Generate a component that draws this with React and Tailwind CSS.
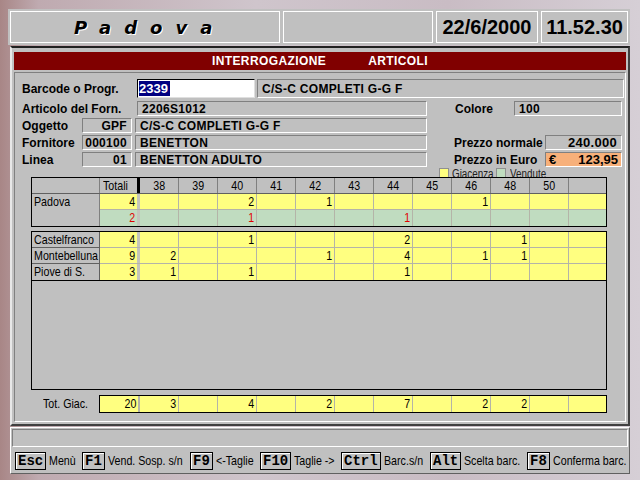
import React from 'react';

const SIZES = ['38', '39', '40', '41', '42', '43', '44', '45', '46', '48', '50'];

const PADOVA_GIAC = { tot: 4, 40: 2, 42: 1, 46: 1 };
const PADOVA_VEND = { tot: 2, 40: 1, 44: 1 };
const NEGOZI = [
  { name: 'Castelfranco', v: { tot: 4, 40: 1, 44: 2, 48: 1 } },
  { name: 'Montebelluna', v: { tot: 9, 38: 2, 42: 1, 44: 4, 46: 1, 48: 1 } },
  { name: 'Piove di S.', v: { tot: 3, 38: 1, 40: 1, 44: 1 } },
];
const TOTALI = { tot: 20, 38: 3, 40: 4, 42: 2, 44: 7, 46: 2, 48: 2 };

const KEYS = [
  { k: 'Esc', label: 'Menù', w: 'w-[67px]' },
  { k: 'F1', label: 'Vend. Sosp. s/n', w: 'w-[108px]' },
  { k: 'F9', label: '<-Taglie', w: 'w-[70px]' },
  { k: 'F10', label: 'Taglie ->', w: 'w-[81px]' },
  { k: 'Ctrl', label: 'Barc.s/n', w: 'w-[89px]' },
  { k: 'Alt', label: 'Scelta barc.', w: 'w-[97px]' },
  { k: 'F8', label: 'Conferma barc.', w: 'w-[100px]' },
];

// testo stretto (tipo Arial Narrow)
function N({ children, o = 'origin-left' }) {
  return <span className={`inline-block ${o} scale-x-[0.82] whitespace-nowrap`}>{children}</span>;
}

function Field({ className = '', children }) {
  return (
    <div className={`flex items-center border border-t-[#808080] border-l-[#808080] border-r-white border-b-white bg-[#c0c0c0] px-[4px] text-[12px] font-bold tracking-[0.3px] ${className}`}>
      {children}
    </div>
  );
}

// una riga di dati della griglia (giacenze o vendute)
function DataRow({ values, bg, red, last }) {
  const col = red ? 'text-[#e00000]' : 'text-black';
  return (
    <div className={`flex h-[16px] ${bg} ${last ? '' : 'border-b border-[#b4b4a8]'}`}>
      <div className={`w-[40px] border-r-[3px] border-[#c4c4bc] text-right pr-[2px] leading-[15px] ${col}`}>
        <N o="origin-right">{values.tot}</N>
      </div>
      {SIZES.map((s) => (
        <div key={s} className={`w-[39px] border-r border-[#b4b4a8] text-right pr-[2px] leading-[15px] ${col}`}>
          <N o="origin-right">{values[s] ?? ''}</N>
        </div>
      ))}
      <div className="flex-1" />
    </div>
  );
}

export default function App() {
  return (
    <div className="w-[640px] h-[480px] overflow-hidden bg-[linear-gradient(90deg,#a88686_0%,#bfaab0_6%,#cfc5cc_40%,#c9bcc4_70%,#d6cfd6_100%)] font-['Liberation_Sans',Arial,sans-serif] text-black flex flex-col">
      {/* barra superiore */}
      <div className="mt-[9px] ml-[8px] w-[622px] h-[36px] bg-[#c0c0c0] flex gap-[3px] p-[2px]">
        <div className="w-[270px] border border-white flex items-center pl-[63px]">
          <span className="text-[18px] font-bold italic tracking-[13px] [text-shadow:1px_1px_0_#ffffff] font-['DejaVu_Sans',sans-serif]">Padova</span>
        </div>
        <div className="w-[150px] border border-white" />
        <div className="w-[102px] border border-white flex items-center justify-center text-[20px] font-bold">22/6/2000</div>
        <div className="flex-1 border border-white flex items-center justify-center text-[20px] font-bold">11.52.30</div>
      </div>

      {/* finestra principale */}
      <div className="mt-[1px] ml-[10px] w-[620px] h-[380px] bg-[#c0c0c0] border-2 border-t-[#202020] border-l-[#e8e8e8] border-r-[#404040] border-b-[#404040] px-[2px] pt-[4px] pb-[2px] flex flex-col">
        <div className="h-[18px] bg-[#800000] flex items-center justify-center gap-[42px] text-white text-[12px] font-bold tracking-[0.4px]">
          <span>INTERROGAZIONE</span>
          <span>ARTICOLI</span>
        </div>

        <div className="mt-[2px] flex-1 border border-t-[#808080] border-l-[#808080] border-r-white border-b-white pt-[6px] pl-[7px] flex flex-col">
          {/* riga barcode */}
          <div className="flex items-center h-[19px]">
            <div className="w-[115px] text-[12px] font-bold">Barcode o Progr.</div>
            <div className="w-[118px] h-[19px] bg-white border border-t-black border-l-black border-r-[#dfdfdf] border-b-[#dfdfdf] flex items-center pl-[1px]">
              <span className="bg-[#000080] text-white text-[13px] font-bold leading-[15px] pr-[2px]">2339</span>
            </div>
            <Field className="ml-[2px] w-[367px] h-[19px]">C/S-C COMPLETI G-G F</Field>
          </div>

          {/* articolo / colore */}
          <div className="mt-[3px] flex items-center h-[15px]">
            <div className="w-[115px] text-[12px] font-bold">Articolo del Forn.</div>
            <Field className="w-[290px] h-[15px]">2206S1012</Field>
            <div className="w-[87px] pl-[28px] text-[12px] font-bold">Colore</div>
            <Field className="w-[108px] h-[15px]">100</Field>
          </div>

          {[
            ['Oggetto', 'GPF', 'C/S-C COMPLETI G-G F', null, null],
            ['Fornitore', '000100', 'BENETTON', 'Prezzo normale', '240.000'],
            ['Linea', '01', 'BENETTON ADULTO', 'Prezzo in Euro', '123,95'],
          ].map(([lab, code, desc, plab, pval]) => (
            <div key={lab} className="mt-[2px] flex items-center h-[15px]">
              <div className="w-[60px] text-[12px] font-bold">{lab}</div>
              <Field className="w-[50px] h-[15px] justify-end">{code}</Field>
              <Field className="ml-[3px] w-[292px] h-[15px]">{desc}</Field>
              {plab && (
                <>
                  <div className="w-[118px] pl-[27px] text-[12px] font-bold whitespace-nowrap">{plab}</div>
                  {lab === 'Linea' ? (
                    <div className="w-[77px] h-[15px] bg-[#f7b07a] border border-t-[#808080] border-l-[#808080] border-r-white border-b-white flex items-center justify-between px-[3px] text-[13px] font-bold">
                      <span>€</span>
                      <span>{pval}</span>
                    </div>
                  ) : (
                    <Field className="w-[77px] h-[15px] justify-end text-[13px]">{pval}</Field>
                  )}
                </>
              )}
            </div>
          ))}

          {/* legenda (il testo è tagliato dalla griglia, come nell'originale) */}
          <div className="mt-[1px] ml-[417px] h-[9px] overflow-hidden flex items-start text-[12px] leading-[12px] text-[#202020]">
            <div className="w-[10px] h-[10px] bg-[#ffff80] border border-[#909090]" />
            <div className="w-[47px] pl-[3px] overflow-hidden"><N>Giacenza</N></div>
            <div className="w-[10px] h-[10px] bg-[#c0dcc0] border border-[#909090]" />
            <div className="w-[46px] pl-[4px] overflow-hidden"><N>Vendute</N></div>
          </div>

          <div className="ml-[9px] w-[576px] text-[13px]">
            {/* griglia Padova */}
            <div className="border border-black bg-[#c0c0c0]">
              <div className="flex h-[16px] border-b border-[#606060]">
                <div className="w-[68px] border-r border-[#808080]" />
                <div className="w-[40px] border-r-[3px] border-black pl-[3px] leading-[15px]"><N>Totali</N></div>
                {SIZES.map((s) => (
                  <div key={s} className="w-[39px] border-r border-[#808080] text-center leading-[15px]"><N o="origin-center">{s}</N></div>
                ))}
                <div className="flex-1" />
              </div>
              <div className="flex">
                <div className="w-[68px] border-r border-[#808080] pl-[2px] leading-[15px]"><N>Padova</N></div>
                <div className="flex-1 flex flex-col">
                  <DataRow values={PADOVA_GIAC} bg="bg-[#ffff80]" />
                  <DataRow values={PADOVA_VEND} bg="bg-[#c0dcc0]" red last />
                </div>
              </div>
            </div>

            {/* griglia negozi */}
            <div className="mt-[4px] h-[159px] border border-black bg-[#c0c0c0]">
              <div className="border-b border-black">
                {NEGOZI.map((n, i) => (
                  <div key={n.name} className="flex">
                    <div className={`w-[68px] border-r border-[#606060] pl-[2px] leading-[15px] overflow-hidden ${i < 2 ? 'border-b' : ''}`}><N>{n.name}</N></div>
                    <div className="flex-1">
                      <DataRow values={n.v} bg="bg-[#ffff80]" last={i === 2} />
                    </div>
                  </div>
                ))}
              </div>
            </div>

            {/* totale giacenze */}
            <div className="mt-[5px] flex items-center h-[18px]">
              <div className="w-[68px] pl-[12px]"><N>Tot. Giac.</N></div>
              <div className="flex-1 h-[18px] border border-black bg-[#ffff80] flex">
                <div className="w-[40px] border-r-2 border-[#b4b4a8] text-right pr-[2px] leading-[16px]"><N o="origin-right">{TOTALI.tot}</N></div>
                {SIZES.map((s) => (
                  <div key={s} className="w-[39px] border-r border-[#b4b4a8] text-right pr-[2px] leading-[16px]"><N o="origin-right">{TOTALI[s] ?? ''}</N></div>
                ))}
                <div className="flex-1" />
              </div>
            </div>
          </div>
        </div>
      </div>

      {/* barra di stato e tasti */}
      <div className="mt-[1px] ml-[10px] w-[620px] h-[47px] bg-[#c0c0c0] border border-t-white border-l-white border-r-[#606060] border-b-[#606060] px-[1px] pt-[1px] flex flex-col">
        <div className="h-[18px] border border-t-[#808080] border-l-[#808080] border-r-white border-b-white" />
        <div className="mt-[4px] flex items-center pl-[3px]">
          {KEYS.map((k) => (
            <div key={k.k} className={`${k.w} flex items-center`}>
              <div className="h-[18px] border border-black shadow-[inset_1px_1px_0_#ffffff] px-[2px] font-['Liberation_Mono',monospace] font-bold text-[14px] leading-[16px]">{k.k}</div>
              <div className="ml-[3px] text-[13px]"><N>{k.label}</N></div>
            </div>
          ))}
        </div>
      </div>
    </div>
  );
}
